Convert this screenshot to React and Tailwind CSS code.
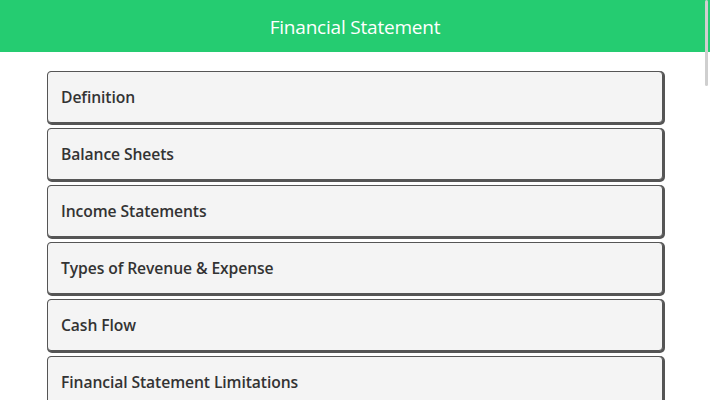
import React from 'react';

const topics = [
  'Definition',
  'Balance Sheets',
  'Income Statements',
  'Types of Revenue & Expense',
  'Cash Flow',
  'Financial Statement Limitations',
];

const App = () => {
  return (
    <div className="relative h-[400px] overflow-hidden bg-white font-['Open_Sans',sans-serif]">
      <header className="h-[52px] bg-[#25cc71] flex items-center justify-center pt-[2px]">
        <h1 className="text-[19px] text-white tracking-[-0.2px]">Financial Statement</h1>
      </header>

      <div className="w-[616px] mx-auto mt-[19px] flex flex-col gap-[5px]">
        {topics.map((t) => (
          <div
            key={t}
            className="h-[52px] shrink-0 flex items-center px-[13px] pt-[2px] bg-[#f4f4f4] border border-[#555] rounded-[4px] shadow-[1px_1px_0_1px_#555]"
          >
            <span className="text-[15.7px] font-semibold text-[#333] tracking-[-0.1px]">{t}</span>
          </div>
        ))}
      </div>

      {/* scrollbar thumb */}
      <div className="absolute top-0 right-[2px] w-[3px] h-[86px] bg-[#cfcfcf] rounded-full" />
    </div>
  );
};

export default App;
